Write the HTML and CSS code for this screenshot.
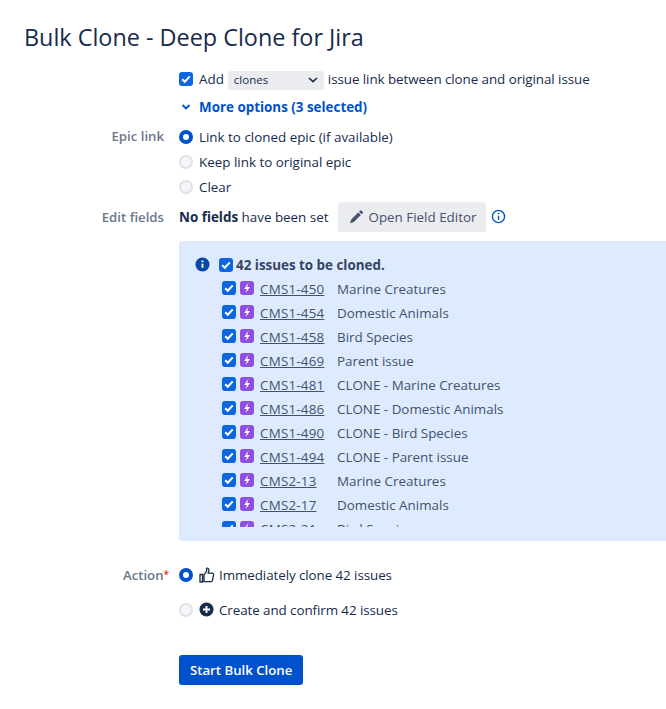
FILE: index.html
```html
<!DOCTYPE html>
<html lang="en">
<head>
<meta charset="utf-8">
<title>Bulk Clone - Deep Clone for Jira</title>
<link rel="stylesheet" href="styles.css">
</head>
<body>
<h1 class="title">Bulk Clone - Deep Clone for Jira</h1>
<div class="form">
  <div class="label"></div>
  <div class="field link-row">
    <span class="check"><svg viewBox="0 0 14 14"><path d="M3.200 7.200l2.600 2.600 5-5.400" /></svg></span>
    <span class="add">Add</span>
    <span class="select">clones<svg class="chev" viewBox="0 0 12 8"><path d="M2 2l4 3.600L10 2"/></svg></span>
    <span class="link-text">issue link between clone and original issue</span>
  </div>
  <div class="label"></div>
  <div class="field more">
    <svg class="more-chev" viewBox="0 0 12 8"><path d="M2.500 2l3.500 3.400L9.500 2"/></svg>
    <span>More options (3 selected)</span>
  </div>
  <div class="label epic-label">Epic link</div>
  <div class="field radios">
    <div class="radio-row"><span class="radio on"></span>Link to cloned epic (if available)</div>
    <div class="radio-row"><span class="radio"></span>Keep link to original epic</div>
    <div class="radio-row"><span class="radio"></span>Clear</div>
  </div>
  <div class="label edit-label">Edit fields</div>
  <div class="field edit-row">
    <span><b>No fields</b> have been set</span>
    <span class="btn"><svg class="pencil" viewBox="0 0 16 16"><path d="M12.500 1l2.800 2.800-1.800 1.800-2.800-2.800zM9.800 3.700l2.800 2.800-7.400 7.400-4.200 1.400 1.400-4.200z"/></svg>Open Field Editor</span>
    <svg class="info-line" viewBox="0 0 16 16"><circle cx="8" cy="8" r="6.500"/><path d="M8 7.200v4.300M8 4v1.700"/></svg>
  </div>
  <div class="label"></div>
  <div class="panel">
    <svg class="info-solid" viewBox="0 0 16 16"><circle cx="8" cy="8" r="7.500" fill="#0747a6"/><path d="M8 7.300v4.200M8 3.800v1.800" stroke="#fff" stroke-width="2" fill="none"/></svg>
    <div class="panel-body">
      <div class="all-row">
        <span class="check"><svg viewBox="0 0 14 14"><path d="M3.200 7.200l2.600 2.600 5-5.400"/></svg></span>
        <b>42 issues to be cloned.</b>
      </div>
      <ul class="issues">
        <li><span class="check"><svg viewBox="0 0 14 14"><path d="M3.200 7.200l2.600 2.600 5-5.400"/></svg></span><span class="type"><svg viewBox="0 0 14 14"><path d="M8.400 2L4 8h2.800L5.600 12 10 6H7.200z"/></svg></span><a class="key">CMS1-450</a><span class="name">Marine Creatures</span></li>
        <li><span class="check"><svg viewBox="0 0 14 14"><path d="M3.200 7.200l2.600 2.600 5-5.400"/></svg></span><span class="type"><svg viewBox="0 0 14 14"><path d="M8.400 2L4 8h2.800L5.600 12 10 6H7.200z"/></svg></span><a class="key">CMS1-454</a><span class="name">Domestic Animals</span></li>
        <li><span class="check"><svg viewBox="0 0 14 14"><path d="M3.200 7.200l2.600 2.600 5-5.400"/></svg></span><span class="type"><svg viewBox="0 0 14 14"><path d="M8.400 2L4 8h2.800L5.600 12 10 6H7.200z"/></svg></span><a class="key">CMS1-458</a><span class="name">Bird Species</span></li>
        <li><span class="check"><svg viewBox="0 0 14 14"><path d="M3.200 7.200l2.600 2.600 5-5.400"/></svg></span><span class="type"><svg viewBox="0 0 14 14"><path d="M8.400 2L4 8h2.800L5.600 12 10 6H7.200z"/></svg></span><a class="key">CMS1-469</a><span class="name">Parent issue</span></li>
        <li><span class="check"><svg viewBox="0 0 14 14"><path d="M3.200 7.200l2.600 2.600 5-5.400"/></svg></span><span class="type"><svg viewBox="0 0 14 14"><path d="M8.400 2L4 8h2.800L5.600 12 10 6H7.200z"/></svg></span><a class="key">CMS1-481</a><span class="name">CLONE - Marine Creatures</span></li>
        <li><span class="check"><svg viewBox="0 0 14 14"><path d="M3.200 7.200l2.600 2.600 5-5.400"/></svg></span><span class="type"><svg viewBox="0 0 14 14"><path d="M8.400 2L4 8h2.800L5.600 12 10 6H7.200z"/></svg></span><a class="key">CMS1-486</a><span class="name">CLONE - Domestic Animals</span></li>
        <li><span class="check"><svg viewBox="0 0 14 14"><path d="M3.200 7.200l2.600 2.600 5-5.400"/></svg></span><span class="type"><svg viewBox="0 0 14 14"><path d="M8.400 2L4 8h2.800L5.600 12 10 6H7.200z"/></svg></span><a class="key">CMS1-490</a><span class="name">CLONE - Bird Species</span></li>
        <li><span class="check"><svg viewBox="0 0 14 14"><path d="M3.200 7.200l2.600 2.600 5-5.400"/></svg></span><span class="type"><svg viewBox="0 0 14 14"><path d="M8.400 2L4 8h2.800L5.600 12 10 6H7.200z"/></svg></span><a class="key">CMS1-494</a><span class="name">CLONE - Parent issue</span></li>
        <li><span class="check"><svg viewBox="0 0 14 14"><path d="M3.200 7.200l2.600 2.600 5-5.400"/></svg></span><span class="type"><svg viewBox="0 0 14 14"><path d="M8.400 2L4 8h2.800L5.600 12 10 6H7.200z"/></svg></span><a class="key">CMS2-13</a><span class="name">Marine Creatures</span></li>
        <li><span class="check"><svg viewBox="0 0 14 14"><path d="M3.200 7.200l2.600 2.600 5-5.400"/></svg></span><span class="type"><svg viewBox="0 0 14 14"><path d="M8.400 2L4 8h2.800L5.600 12 10 6H7.200z"/></svg></span><a class="key">CMS2-17</a><span class="name">Domestic Animals</span></li>
        <li><span class="check"><svg viewBox="0 0 14 14"><path d="M3.200 7.200l2.600 2.600 5-5.400"/></svg></span><span class="type"><svg viewBox="0 0 14 14"><path d="M8.400 2L4 8h2.800L5.600 12 10 6H7.200z"/></svg></span><a class="key">CMS2-21</a><span class="name">Bird Species</span></li>
      </ul>
    </div>
  </div>
  <div class="label action-label">Action<span class="req">*</span></div>
  <div class="field actions">
    <div class="action-row"><span class="radio on"></span><svg class="thumb" viewBox="0 0 16 16"><path d="M1 7.500h2.500v7.500H1zM5 7.800L7.600 4V1.300c1.400-.5 2.300.5 2.300 1.800 0 1.100-.4 2.100-.7 3h3.900c1.100 0 1.700.8 1.500 1.800l-1.200 5.400c-.2.900-.7 1.400-1.500 1.400H5z"/></svg><span class="action-text">Immediately clone 42 issues</span></div>
    <div class="action-row"><span class="radio"></span><svg class="plus" viewBox="0 0 16 16"><circle cx="8" cy="8" r="7.500" fill="#172b4d"/><path d="M8 4.200v7.600M4.200 8h7.600" stroke="#fff" stroke-width="2"/></svg><span class="action-text">Create and confirm 42 issues</span></div>
  </div>
  <div class="label"></div>
  <div class="submit"><span class="primary">Start Bulk Clone</span></div>
</div>
</body>
</html>
```
FILE: styles.css
```css
* { box-sizing: border-box; }
html, body { margin: 0; height: 100%; overflow: hidden; background: #fff; }
body {
  font-family: "Open Sans", "Noto Sans", sans-serif;
  font-size: 13.4px;
  line-height: 20px;
  color: #172b4d;
  padding: 24px 0 0 24px;
}
.title { margin: 0 0 17px; font-size: 23.4px; line-height: 26px; font-weight: 500; color: #172b4d; }
.form { display: grid; grid-template-columns: 140px 520px; column-gap: 15px; }
.label { text-align: right; color: #6b778c; font-weight: 600; font-size: 13.2px; }
.field { display: flex; align-items: center; }
.check {
  flex: none; width: 14px; height: 14px; border-radius: 3px; background: #0c66e4;
  display: inline-flex;
}
.check svg { width: 14px; height: 14px; fill: none; stroke: #fff; stroke-width: 2; }
.link-row { height: 24px; }
.add { margin: 0 4px 0 6px; }
.select {
  display: inline-flex; align-items: center; justify-content: space-between;
  width: 96px; height: 19px; margin-right: 4px; padding: 0 5px 0 6px;
  background: #ebecf0; border-radius: 3px; font-size: 11.5px; position: relative; top: 1px;
}
.chev { width: 12px; height: 8px; fill: none; stroke: #172b4d; stroke-width: 1.600; }
.link-text { letter-spacing: -0.07px; }
.more { height: 31px; color: #0052cc; font-weight: 700; }
.more-chev { width: 14px; height: 8px; margin-right: 6px; fill: none; stroke: #0052cc; stroke-width: 1.800; }
.epic-label { padding-top: 4px; }
.radios { flex-direction: column; align-items: flex-start; padding-top: 2px; }
.radio-row { display: flex; align-items: center; height: 25px; }
.radio {
  flex: none; width: 14px; height: 14px; border-radius: 50%;
  background: #f4f5f7; border: 2px solid #dfe1e6; margin-right: 6px;
}
.radio.on { background: #fff; border: 4px solid #0052cc; }
.edit-label { padding-top: 8px; }
.edit-row { height: 35px; }
.btn {
  display: inline-flex; align-items: center; height: 30px; margin: 0 5px 0 10px; padding: 0 10px 0 11px;
  background: #ebecf0; border-radius: 3px; color: #42526e;
}
.pencil { width: 15px; height: 15px; margin-right: 4px; fill: #42526e; }
.info-line { width: 15px; height: 15px; fill: none; stroke: #0052cc; stroke-width: 1.500; }
.panel {
  display: flex; height: 300px; padding: 14px 0 14px 16px; background: #deebff; border-radius: 3px;
  margin-top: 7px; width: 520px;
}
.info-solid { flex: none; width: 15px; height: 15px; margin: 2px 9px 0 0; }
.panel-body { overflow: hidden; flex: 1; }
.all-row { display: flex; align-items: center; height: 20px; color: #344563; margin-bottom: 2px; }
.all-row .check { margin-right: 3px; }
.all-row b { font-weight: 700; }
.issues { list-style: none; margin: 0; padding: 0 0 0 3px; color: #42526e; }
.issues li { display: flex; align-items: center; height: 24px; }
.issues .check { margin-top: -3px; }
.type {
  flex: none; width: 14px; height: 14px; margin: -3px 6px 0 4px; border-radius: 3px; background: #904ee2;
  display: inline-flex;
}
.type svg { width: 14px; height: 14px; fill: #fff; }
.key { text-decoration: underline; width: 77px; flex: none; letter-spacing: 0.2px; }
.actions { flex-direction: column; align-items: flex-start; padding-top: 16px; }
.action-label { padding-top: 24px; }
.req { color: #de350b; font-size: 10px; margin-right: -5px; vertical-align: 2px; line-height: 0; }
.action-row { display: flex; align-items: center; height: 35px; }
.action-row .radio { margin-right: 6px; }
.action-text { letter-spacing: -0.08px; }
.thumb { width: 16px; height: 16px; margin-right: 4px; fill: none; stroke: #172b4d; stroke-width: 1.300; }
.plus { width: 15px; height: 15px; margin-right: 5px; }
.submit { padding-top: 28px; }
.primary {
  display: inline-flex; align-items: center; height: 30px; padding: 0 11px; border-radius: 3px;
  background: #0052cc; color: #fff; font-weight: 600; font-size: 13.2px;
}
```
